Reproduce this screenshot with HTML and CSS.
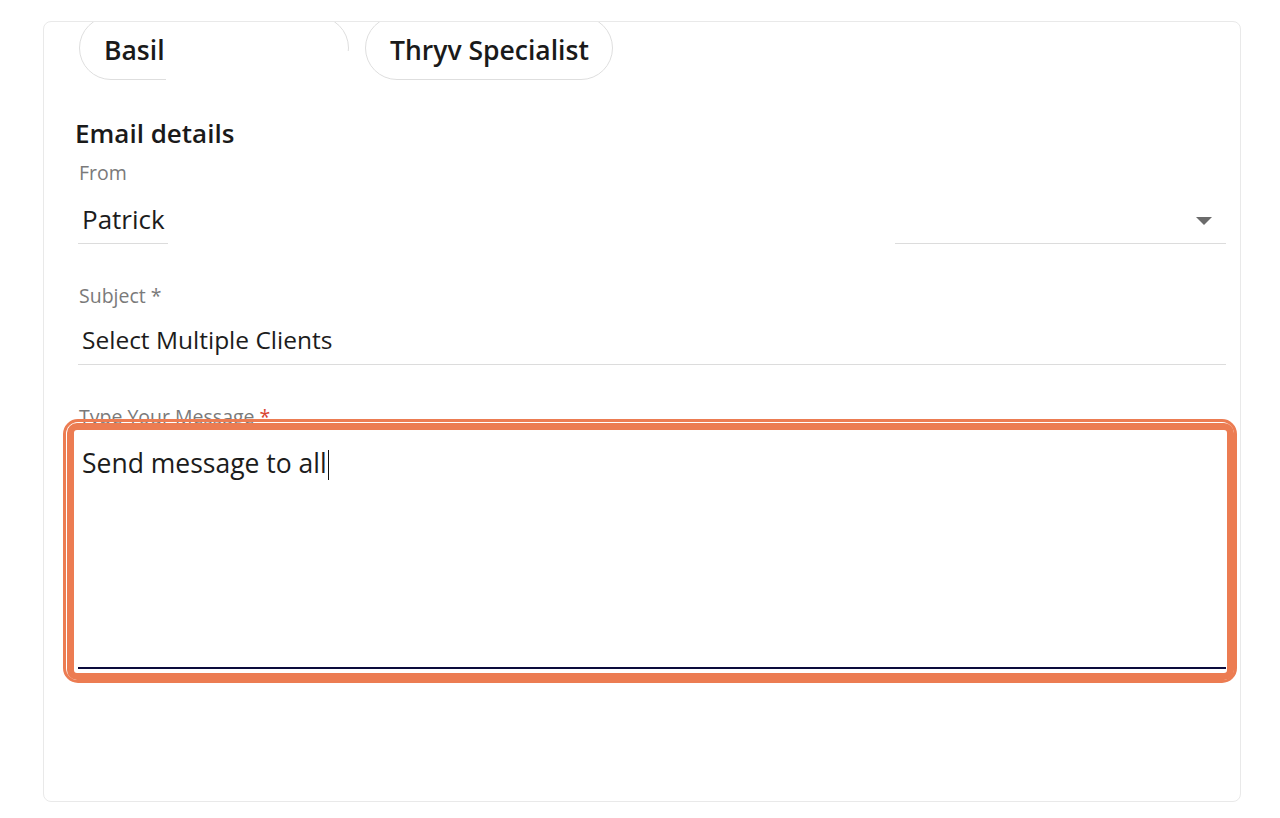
FILE: index.html
```html
<!DOCTYPE html>
<html lang="en">
<head>
    <meta charset="UTF-8">
    <meta name="viewport" content="width=device-width, initial-scale=1.0">
    <title>Email details</title>
    <link rel="stylesheet" href="styles.css">
</head>
<body>
    <div class="card">
        <div class="chips">
            <span class="chip chip-basil">Basil<i class="chip-cover"></i></span>
            <span class="chip">Thryv Specialist</span>
        </div>

        <h2 class="title">Email details</h2>

        <div class="field">
            <p class="label">From</p>
            <div class="value select">
                <span class="select-text">Patrick</span>
                <span class="select-gap"></span>
                <span class="select-end">
                    <svg width="16" height="8" viewBox="0 0 16 8"><path d="M0 0h16L8 8z" fill="#6b6b6b"/></svg>
                </span>
            </div>
        </div>

        <div class="field">
            <p class="label">Subject *</p>
            <div class="value line">Select Multiple Clients</div>
        </div>

        <div class="field message">
            <p class="label">Type Your Message <span class="req">*</span></p>
            <div class="textarea">Send message to all<span class="caret"></span></div>
            <div class="ring"><div class="ring-inner"></div></div>
        </div>
    </div>
</body>
</html>
```

FILE: styles.css
```css
body{
    margin: 0;
    background: #fff;
    font-family: "Open Sans", "Noto Sans", sans-serif;
    color: #1c1c1c;
}

.card{
    box-sizing: border-box;
    margin: 21px 0 0 43px;
    width: 1198px;
    height: 781px;
    border: 1px solid #e9e9e9;
    border-radius: 8px;
    padding: 0 14px 0 34px;
    overflow: hidden;
}

.chips{
    display: flex;
    gap: 16px;
    margin-top: -6px;
    margin-left: 1px;
}

.chip{
    position: relative;
    box-sizing: border-box;
    height: 64px;
    display: flex;
    align-items: center;
    padding: 4px 23px 0 24px;
    border: 1px solid #dedede;
    border-radius: 32px;
    font-size: 26.5px;
    font-weight: 600;
    color: #1a1a1a;
}

.chip-basil{
    width: 270px;
}

.chip-cover{
    position: absolute;
    left: 86px;
    right: -2px;
    bottom: -2px;
    height: 30px;
    background: #fff;
}

.title{
    margin: 38px 0 0 -3px;
    font-size: 26px;
    line-height: 30px;
    font-weight: 600;
    color: #1a1a1a;
}

.field{
    margin-top: 13px;
}

.field + .field{
    margin-top: 40px;
}

.label{
    margin: 0;
    padding-left: 1px;
    font-size: 19.5px;
    line-height: 24px;
    color: #7a7a7a;
}

.value{
    margin-top: 14px;
    font-size: 26px;
    line-height: 32px;
}

.line{
    margin-top: 12px;
    padding: 4px 0 8px 4px;
    font-size: 24.5px;
    border-bottom: 1px solid #dcdcdc;
}

.select{
    display: flex;
}

.select-text{
    padding: 4px 3px 8px 4px;
    border-bottom: 1px solid #dcdcdc;
}

.select-gap{
    width: 727px;
}

.select-end{
    flex: 1;
    display: flex;
    justify-content: flex-end;
    align-items: center;
    padding-right: 14px;
    border-bottom: 1px solid #dcdcdc;
}

.message{
    position: relative;
    margin-top: 39px;
}

.req{
    color: #d9432f;
}

.textarea{
    box-sizing: border-box;
    height: 240px;
    padding: 18px 0 0 4px;
    font-size: 26.5px;
    line-height: 32px;
    border-bottom: 2px solid #0c0c3c;
}

.caret{
    display: inline-block;
    width: 1.5px;
    height: 30px;
    margin-left: 1px;
    background: #111;
    vertical-align: -7px;
}

.ring{
    position: absolute;
    left: -15px;
    top: 14px;
    width: 1174px;
    height: 264px;
    box-sizing: border-box;
    border: 3px solid #ec7c52;
    border-radius: 15px;
    padding: 1px 0 0 1px;
}

.ring-inner{
    box-sizing: border-box;
    height: 100%;
    border: 7px solid #ec7c52;
    border-radius: 10px;
}
```
